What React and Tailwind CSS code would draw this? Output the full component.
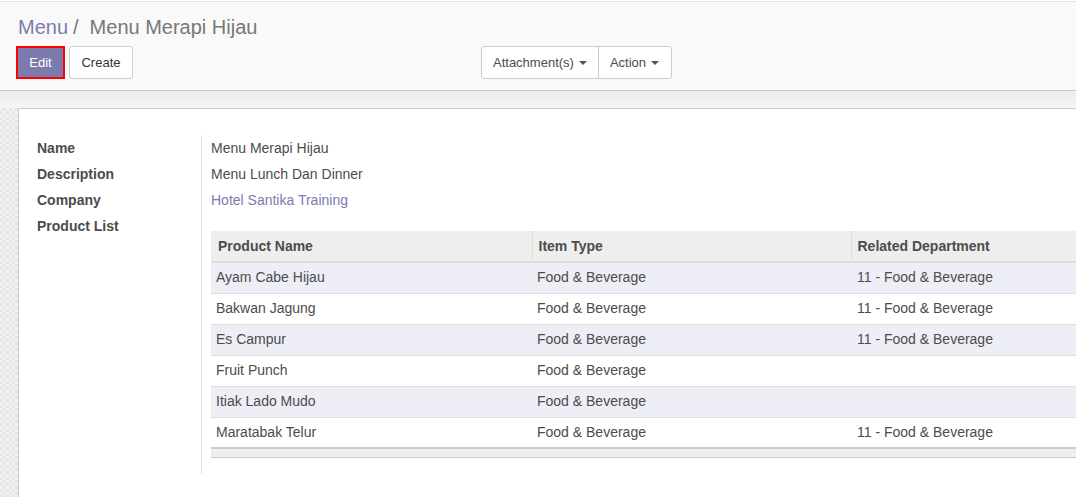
import React from 'react';

const products = [
  { name: 'Ayam Cabe Hijau', type: 'Food & Beverage', dept: '11 - Food & Beverage' },
  { name: 'Bakwan Jagung', type: 'Food & Beverage', dept: '11 - Food & Beverage' },
  { name: 'Es Campur', type: 'Food & Beverage', dept: '11 - Food & Beverage' },
  { name: 'Fruit Punch', type: 'Food & Beverage', dept: '' },
  { name: 'Itiak Lado Mudo', type: 'Food & Beverage', dept: '' },
  { name: 'Maratabak Telur', type: 'Food & Beverage', dept: '11 - Food & Beverage' },
];

function Caret() {
  return (
    <span className="inline-block w-0 h-0 ml-[5px] align-middle border-l-[4px] border-r-[4px] border-t-[4px] border-l-transparent border-r-transparent border-t-[#555]" />
  );
}

function ControlPanel() {
  return (
    <div className="bg-[#f9f9f9] border-t border-b border-t-[#e3e3e3] border-b-[#c9c9c9] h-[90px] pl-[16px]">
      <div className="pt-[12px] h-[44px] text-[20px] leading-[26px] pl-[2px]">
        <span className="text-[#7c7bad]">Menu</span>
        <span className="text-[#777] ml-[5px]">/</span>
        <span className="text-[#777] ml-[11px]">Menu Merapi Hijau</span>
      </div>
      <div className="flex items-center text-[13px]">
        <div className="flex w-[465px] gap-[4px]">
          <button className="h-[33px] w-[49px] border-2 border-[#ff0000] bg-[#7c7bad] text-white">Edit</button>
          <button className="h-[33px] w-[64px] border border-[#ccc] rounded-[3px] bg-white text-[#333]">Create</button>
        </div>
        <div className="flex h-[33px] border border-[#ccc] rounded-[3px] bg-white text-[#4c4c4c]">
          <button className="px-[11px] flex items-center border-r border-[#ccc]">
            Attachment(s)
            <Caret />
          </button>
          <button className="pl-[11px] pr-[12px] flex items-center">
            Action
            <Caret />
          </button>
        </div>
      </div>
    </div>
  );
}

function Field({ children }) {
  return <div className="h-[26px] leading-[26px]">{children}</div>;
}

function ProductTable() {
  return (
    <table className="w-[980px] border-collapse text-left table-fixed">
      <colgroup>
        <col className="w-[321px]" />
        <col className="w-[319px]" />
        <col />
      </colgroup>
      <thead>
        <tr className="bg-[#eeeeee] h-[31px] border-b-2 border-[#dddddd]">
          <th className="font-bold px-[7px]">Product Name</th>
          <th className="font-bold px-[6px] border-l border-[#dddddd]">Item Type</th>
          <th className="font-bold px-[6px] border-l border-[#dddddd]">Related Department</th>
        </tr>
      </thead>
      <tbody>
        {products.map((p, i) => (
          <tr key={p.name} className={'h-[31px] border-t border-[#dddddd] ' + (i % 2 === 0 ? 'bg-[#eeeef6]' : 'bg-white')}>
            <td className="px-[5px]">{p.name}</td>
            <td className="px-[5px]">{p.type}</td>
            <td className="px-[6px]">{p.dept}</td>
          </tr>
        ))}
      </tbody>
      <tfoot>
        <tr className="h-[9px] bg-[#eeeeee] border-t-2 border-b border-[#cccccc]">
          <td colSpan={3} />
        </tr>
      </tfoot>
    </table>
  );
}

export default function App() {
  return (
    <div className="min-h-[497px] bg-white pt-[1px] text-[14px] text-[#4c4c4c]" style={{ fontFamily: '"Liberation Sans", Arial, sans-serif' }}>
      <ControlPanel />
      <div className="h-[17px] bg-gradient-to-b from-[#ececec] to-[#f6f6f6]" />
      <div className="flex min-h-[389px]">
        <div className="w-[18px] shrink-0 bg-[#ececec] bg-[repeating-conic-gradient(#e6e6e6_0%_25%,#f1f1f1_0%_50%)] bg-[length:6px_6px]" />
        <div className="flex-1 min-w-0 overflow-hidden bg-white border-l border-t border-l-[#c9c8d8] border-t-[#cccccc] pl-[18px] pt-[26px]">
          <div className="flex">
            <div className="w-[164px] shrink-0 font-bold">
              <Field>Name</Field>
              <Field>Description</Field>
              <Field>Company</Field>
              <Field>Product List</Field>
            </div>
            <div className="border-l border-[#dddddd] pl-[9px] pb-[16px]">
              <Field>Menu Merapi Hijau</Field>
              <Field>Menu Lunch Dan Dinner</Field>
              <Field><span className="text-[#7c7bad]">Hotel Santika Training</span></Field>
              <div className="mt-[18px]">
                <ProductTable />
              </div>
            </div>
          </div>
        </div>
      </div>
    </div>
  );
}
